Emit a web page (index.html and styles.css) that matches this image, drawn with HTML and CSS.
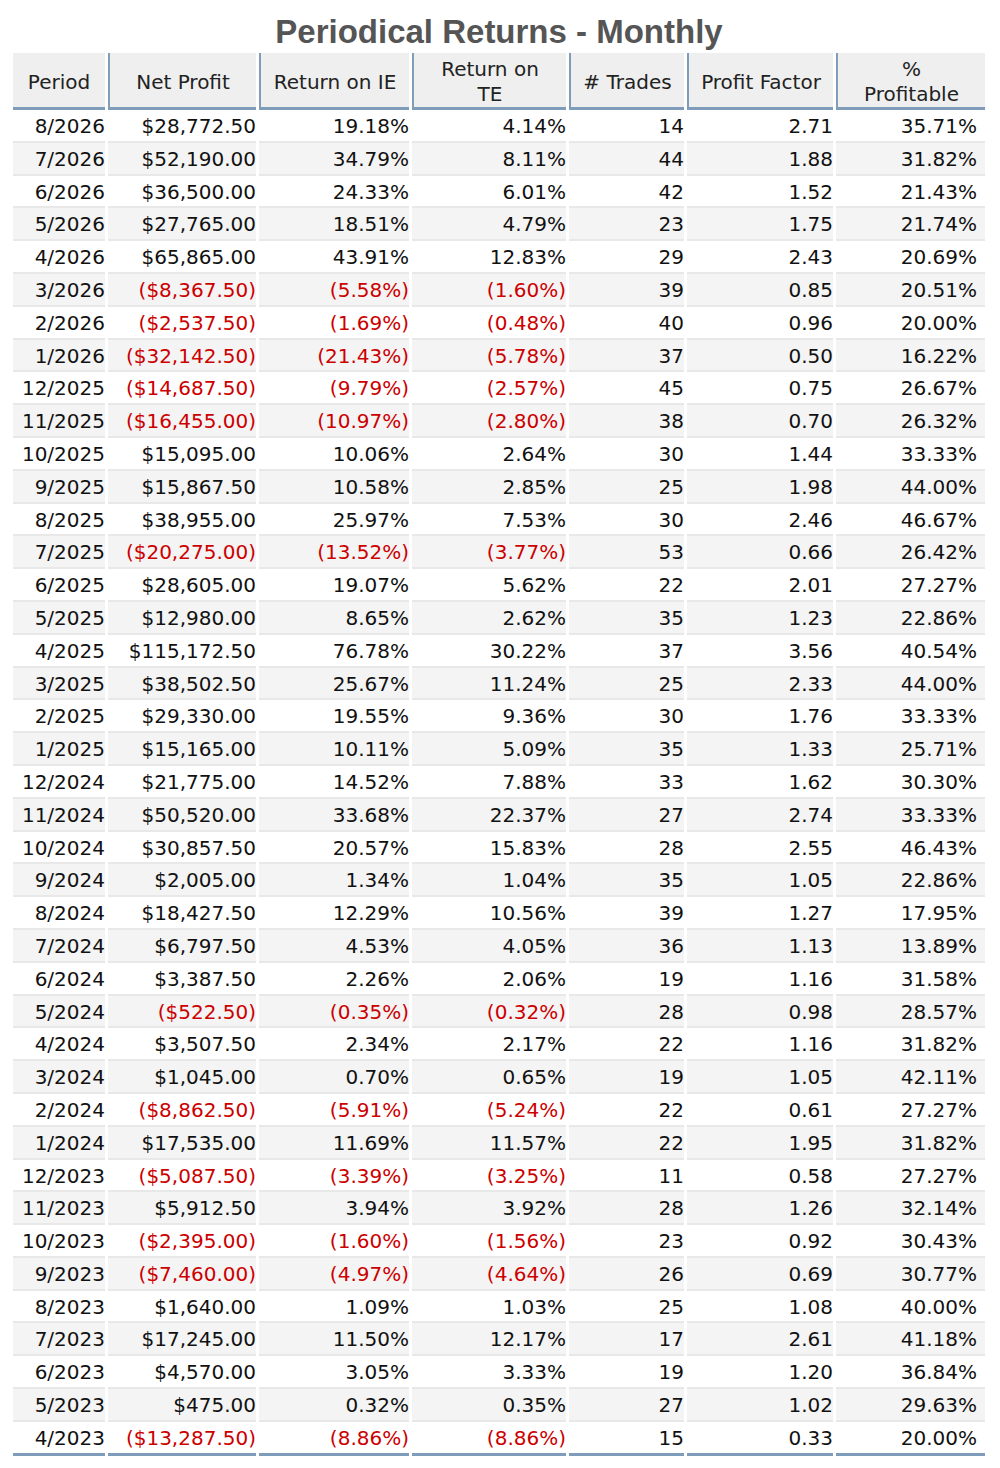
FILE: index.html
```html
<!DOCTYPE html>
<html>
<head>
<meta charset="utf-8">
<link rel="stylesheet" href="styles.css">
</head>
<body>
<div class="page">
<h1 class="title">Periodical Returns - Monthly</h1>
<table class="returns">
<colgroup>
<col class="c1"><col class="c2"><col class="c3"><col class="c4"><col class="c5"><col class="c6"><col class="c7">
</colgroup>
<thead>
<tr><th class="first">Period</th><th>Net Profit</th><th>Return on IE</th><th>Return on<br>TE</th><th># Trades</th><th>Profit Factor</th><th>%<br>Profitable</th></tr>
</thead>
<tbody>
<tr><td>8/2026</td><td>$28,772.50</td><td>19.18%</td><td>4.14%</td><td>14</td><td>2.71</td><td>35.71%</td></tr>
<tr><td>7/2026</td><td>$52,190.00</td><td>34.79%</td><td>8.11%</td><td>44</td><td>1.88</td><td>31.82%</td></tr>
<tr><td>6/2026</td><td>$36,500.00</td><td>24.33%</td><td>6.01%</td><td>42</td><td>1.52</td><td>21.43%</td></tr>
<tr><td>5/2026</td><td>$27,765.00</td><td>18.51%</td><td>4.79%</td><td>23</td><td>1.75</td><td>21.74%</td></tr>
<tr><td>4/2026</td><td>$65,865.00</td><td>43.91%</td><td>12.83%</td><td>29</td><td>2.43</td><td>20.69%</td></tr>
<tr><td>3/2026</td><td class="neg">($8,367.50)</td><td class="neg">(5.58%)</td><td class="neg">(1.60%)</td><td>39</td><td>0.85</td><td>20.51%</td></tr>
<tr><td>2/2026</td><td class="neg">($2,537.50)</td><td class="neg">(1.69%)</td><td class="neg">(0.48%)</td><td>40</td><td>0.96</td><td>20.00%</td></tr>
<tr><td>1/2026</td><td class="neg">($32,142.50)</td><td class="neg">(21.43%)</td><td class="neg">(5.78%)</td><td>37</td><td>0.50</td><td>16.22%</td></tr>
<tr><td>12/2025</td><td class="neg">($14,687.50)</td><td class="neg">(9.79%)</td><td class="neg">(2.57%)</td><td>45</td><td>0.75</td><td>26.67%</td></tr>
<tr><td>11/2025</td><td class="neg">($16,455.00)</td><td class="neg">(10.97%)</td><td class="neg">(2.80%)</td><td>38</td><td>0.70</td><td>26.32%</td></tr>
<tr><td>10/2025</td><td>$15,095.00</td><td>10.06%</td><td>2.64%</td><td>30</td><td>1.44</td><td>33.33%</td></tr>
<tr><td>9/2025</td><td>$15,867.50</td><td>10.58%</td><td>2.85%</td><td>25</td><td>1.98</td><td>44.00%</td></tr>
<tr><td>8/2025</td><td>$38,955.00</td><td>25.97%</td><td>7.53%</td><td>30</td><td>2.46</td><td>46.67%</td></tr>
<tr><td>7/2025</td><td class="neg">($20,275.00)</td><td class="neg">(13.52%)</td><td class="neg">(3.77%)</td><td>53</td><td>0.66</td><td>26.42%</td></tr>
<tr><td>6/2025</td><td>$28,605.00</td><td>19.07%</td><td>5.62%</td><td>22</td><td>2.01</td><td>27.27%</td></tr>
<tr><td>5/2025</td><td>$12,980.00</td><td>8.65%</td><td>2.62%</td><td>35</td><td>1.23</td><td>22.86%</td></tr>
<tr><td>4/2025</td><td>$115,172.50</td><td>76.78%</td><td>30.22%</td><td>37</td><td>3.56</td><td>40.54%</td></tr>
<tr><td>3/2025</td><td>$38,502.50</td><td>25.67%</td><td>11.24%</td><td>25</td><td>2.33</td><td>44.00%</td></tr>
<tr><td>2/2025</td><td>$29,330.00</td><td>19.55%</td><td>9.36%</td><td>30</td><td>1.76</td><td>33.33%</td></tr>
<tr><td>1/2025</td><td>$15,165.00</td><td>10.11%</td><td>5.09%</td><td>35</td><td>1.33</td><td>25.71%</td></tr>
<tr><td>12/2024</td><td>$21,775.00</td><td>14.52%</td><td>7.88%</td><td>33</td><td>1.62</td><td>30.30%</td></tr>
<tr><td>11/2024</td><td>$50,520.00</td><td>33.68%</td><td>22.37%</td><td>27</td><td>2.74</td><td>33.33%</td></tr>
<tr><td>10/2024</td><td>$30,857.50</td><td>20.57%</td><td>15.83%</td><td>28</td><td>2.55</td><td>46.43%</td></tr>
<tr><td>9/2024</td><td>$2,005.00</td><td>1.34%</td><td>1.04%</td><td>35</td><td>1.05</td><td>22.86%</td></tr>
<tr><td>8/2024</td><td>$18,427.50</td><td>12.29%</td><td>10.56%</td><td>39</td><td>1.27</td><td>17.95%</td></tr>
<tr><td>7/2024</td><td>$6,797.50</td><td>4.53%</td><td>4.05%</td><td>36</td><td>1.13</td><td>13.89%</td></tr>
<tr><td>6/2024</td><td>$3,387.50</td><td>2.26%</td><td>2.06%</td><td>19</td><td>1.16</td><td>31.58%</td></tr>
<tr><td>5/2024</td><td class="neg">($522.50)</td><td class="neg">(0.35%)</td><td class="neg">(0.32%)</td><td>28</td><td>0.98</td><td>28.57%</td></tr>
<tr><td>4/2024</td><td>$3,507.50</td><td>2.34%</td><td>2.17%</td><td>22</td><td>1.16</td><td>31.82%</td></tr>
<tr><td>3/2024</td><td>$1,045.00</td><td>0.70%</td><td>0.65%</td><td>19</td><td>1.05</td><td>42.11%</td></tr>
<tr><td>2/2024</td><td class="neg">($8,862.50)</td><td class="neg">(5.91%)</td><td class="neg">(5.24%)</td><td>22</td><td>0.61</td><td>27.27%</td></tr>
<tr><td>1/2024</td><td>$17,535.00</td><td>11.69%</td><td>11.57%</td><td>22</td><td>1.95</td><td>31.82%</td></tr>
<tr><td>12/2023</td><td class="neg">($5,087.50)</td><td class="neg">(3.39%)</td><td class="neg">(3.25%)</td><td>11</td><td>0.58</td><td>27.27%</td></tr>
<tr><td>11/2023</td><td>$5,912.50</td><td>3.94%</td><td>3.92%</td><td>28</td><td>1.26</td><td>32.14%</td></tr>
<tr><td>10/2023</td><td class="neg">($2,395.00)</td><td class="neg">(1.60%)</td><td class="neg">(1.56%)</td><td>23</td><td>0.92</td><td>30.43%</td></tr>
<tr><td>9/2023</td><td class="neg">($7,460.00)</td><td class="neg">(4.97%)</td><td class="neg">(4.64%)</td><td>26</td><td>0.69</td><td>30.77%</td></tr>
<tr><td>8/2023</td><td>$1,640.00</td><td>1.09%</td><td>1.03%</td><td>25</td><td>1.08</td><td>40.00%</td></tr>
<tr><td>7/2023</td><td>$17,245.00</td><td>11.50%</td><td>12.17%</td><td>17</td><td>2.61</td><td>41.18%</td></tr>
<tr><td>6/2023</td><td>$4,570.00</td><td>3.05%</td><td>3.33%</td><td>19</td><td>1.20</td><td>36.84%</td></tr>
<tr><td>5/2023</td><td>$475.00</td><td>0.32%</td><td>0.35%</td><td>27</td><td>1.02</td><td>29.63%</td></tr>
<tr><td>4/2023</td><td class="neg">($13,287.50)</td><td class="neg">(8.86%)</td><td class="neg">(8.86%)</td><td>15</td><td>0.33</td><td>20.00%</td></tr>
</tbody>
</table>
</div>
</body>
</html>
```

FILE: styles.css
```css
html, body {
  margin: 0;
  padding: 0;
  background: #ffffff;
}

.page {
  padding: 0 0 0 10px;
  width: 978px;
}

.title {
  margin: 0 0 2px 0;
  padding-top: 13px;
  font-family: "Liberation Sans", Arial, sans-serif;
  font-weight: bold;
  font-size: 33px;
  line-height: 38px;
  color: #555555;
  text-align: center;
}

.returns {
  width: 978px;
  table-layout: fixed;
  border-collapse: separate;
  border-spacing: 3px 0;
  font-family: "DejaVu Sans", Verdana, sans-serif;
  font-size: 20px;
  color: #111111;
}

.c1 { width: 92px; }
.c2 { width: 148px; }
.c3 { width: 150px; }
.c4 { width: 154px; }
.c5 { width: 115px; }
.c6 { width: 146px; }
.c7 { width: 149px; }

.returns th {
  box-sizing: border-box;
  height: 55px;
  padding: 4px 0 0 0;
  font-weight: normal;
  line-height: 25px;
  color: #222222;
  background: #efefef;
  border-left: 2px solid #7f9dbb;
  border-bottom: 3px solid #7f9dbb;
  text-align: center;
  vertical-align: middle;
}

.returns th.first {
  border-left: none;
}

.returns td {
  box-sizing: border-box;
  height: 32.8px;
  padding: 2px 0 0 0;
  line-height: 28.8px;
  text-align: right;
  white-space: nowrap;
  border-bottom: 2px solid #e8e8e8;
}

.returns td:last-child {
  padding-right: 8px;
}

.returns tbody tr:nth-child(even) td {
  background: #f4f4f4;
}

.returns tbody tr:last-child td {
  border-bottom: 3px solid #7f9dbb;
}

.returns td.neg {
  color: #cc0000;
}
```
